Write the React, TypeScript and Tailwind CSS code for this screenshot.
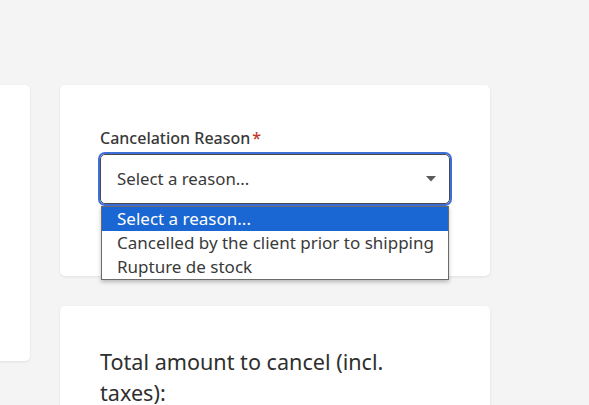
export default function App() {
  const options = [
    "Select a reason...",
    "Cancelled by the client prior to shipping",
    "Rupture de stock",
  ];

  return (
    <div
      className="h-[405px] w-full overflow-hidden bg-[#f4f4f4] text-[#333]"
      style={{ fontFamily: '"Noto Sans", "Open Sans", sans-serif' }}
    >
      <div className="flex gap-[30px] pt-[85px] -ml-[270px]">
        {/* left column card, mostly off screen */}
        <div className="h-[276px] w-[300px] shrink-0 rounded-[5px] bg-white shadow-[0_1px_3px_rgba(0,0,0,0.08)]" />

        {/* right column */}
        <div className="flex w-[430px] shrink-0 flex-col gap-[30px]">
          <div className="h-[191px] rounded-[5px] bg-white px-[40px] pt-[40px] shadow-[0_1px_3px_rgba(0,0,0,0.08)]">
            <label className="flex items-center text-[16px] font-medium leading-[26px] text-[#393939]">
              Cancelation Reason
              <span className="ml-[2px] text-[#c0392b]">*</span>
            </label>
            <div className="relative mt-[3px]">
              <div className="flex h-[50px] items-center justify-between rounded-[5px] border border-[#4a4a4a] pl-[16px] pr-[13px] outline-2 outline-offset-0 outline-[#3d6fd9]">
                <span className="text-[16.8px] text-[#3a3a3a]">Select a reason...</span>
                <svg width="10" height="6" viewBox="0 0 10 6" className="fill-[#5a5a5a]">
                  <path d="M0 0 L10 0 L5 5.5 Z" />
                </svg>
              </div>
              <ul className="absolute left-[1px] right-[1px] top-[52px] z-10 border border-[#6b6b6b] bg-white shadow-[0_2px_4px_rgba(0,0,0,0.25)]">
                {options.map((o, i) => (
                  <li
                    key={o}
                    className={`h-[24px] pl-[15px] text-[17px] leading-[24px] ${
                      i === 0 ? "bg-[#1a66d2] text-white" : "text-[#3a3a3a]"
                    }`}
                  >
                    {o}
                  </li>
                ))}
              </ul>
            </div>
          </div>

          <div className="h-[200px] rounded-[5px] bg-white px-[40px] pt-[40px] shadow-[0_1px_3px_rgba(0,0,0,0.08)]">
            <h2 className="text-[21.6px] font-normal leading-[31px] text-[#2f2f2f]">
              Total amount to cancel (incl. taxes):
            </h2>
          </div>
        </div>
      </div>
    </div>
  );
}
